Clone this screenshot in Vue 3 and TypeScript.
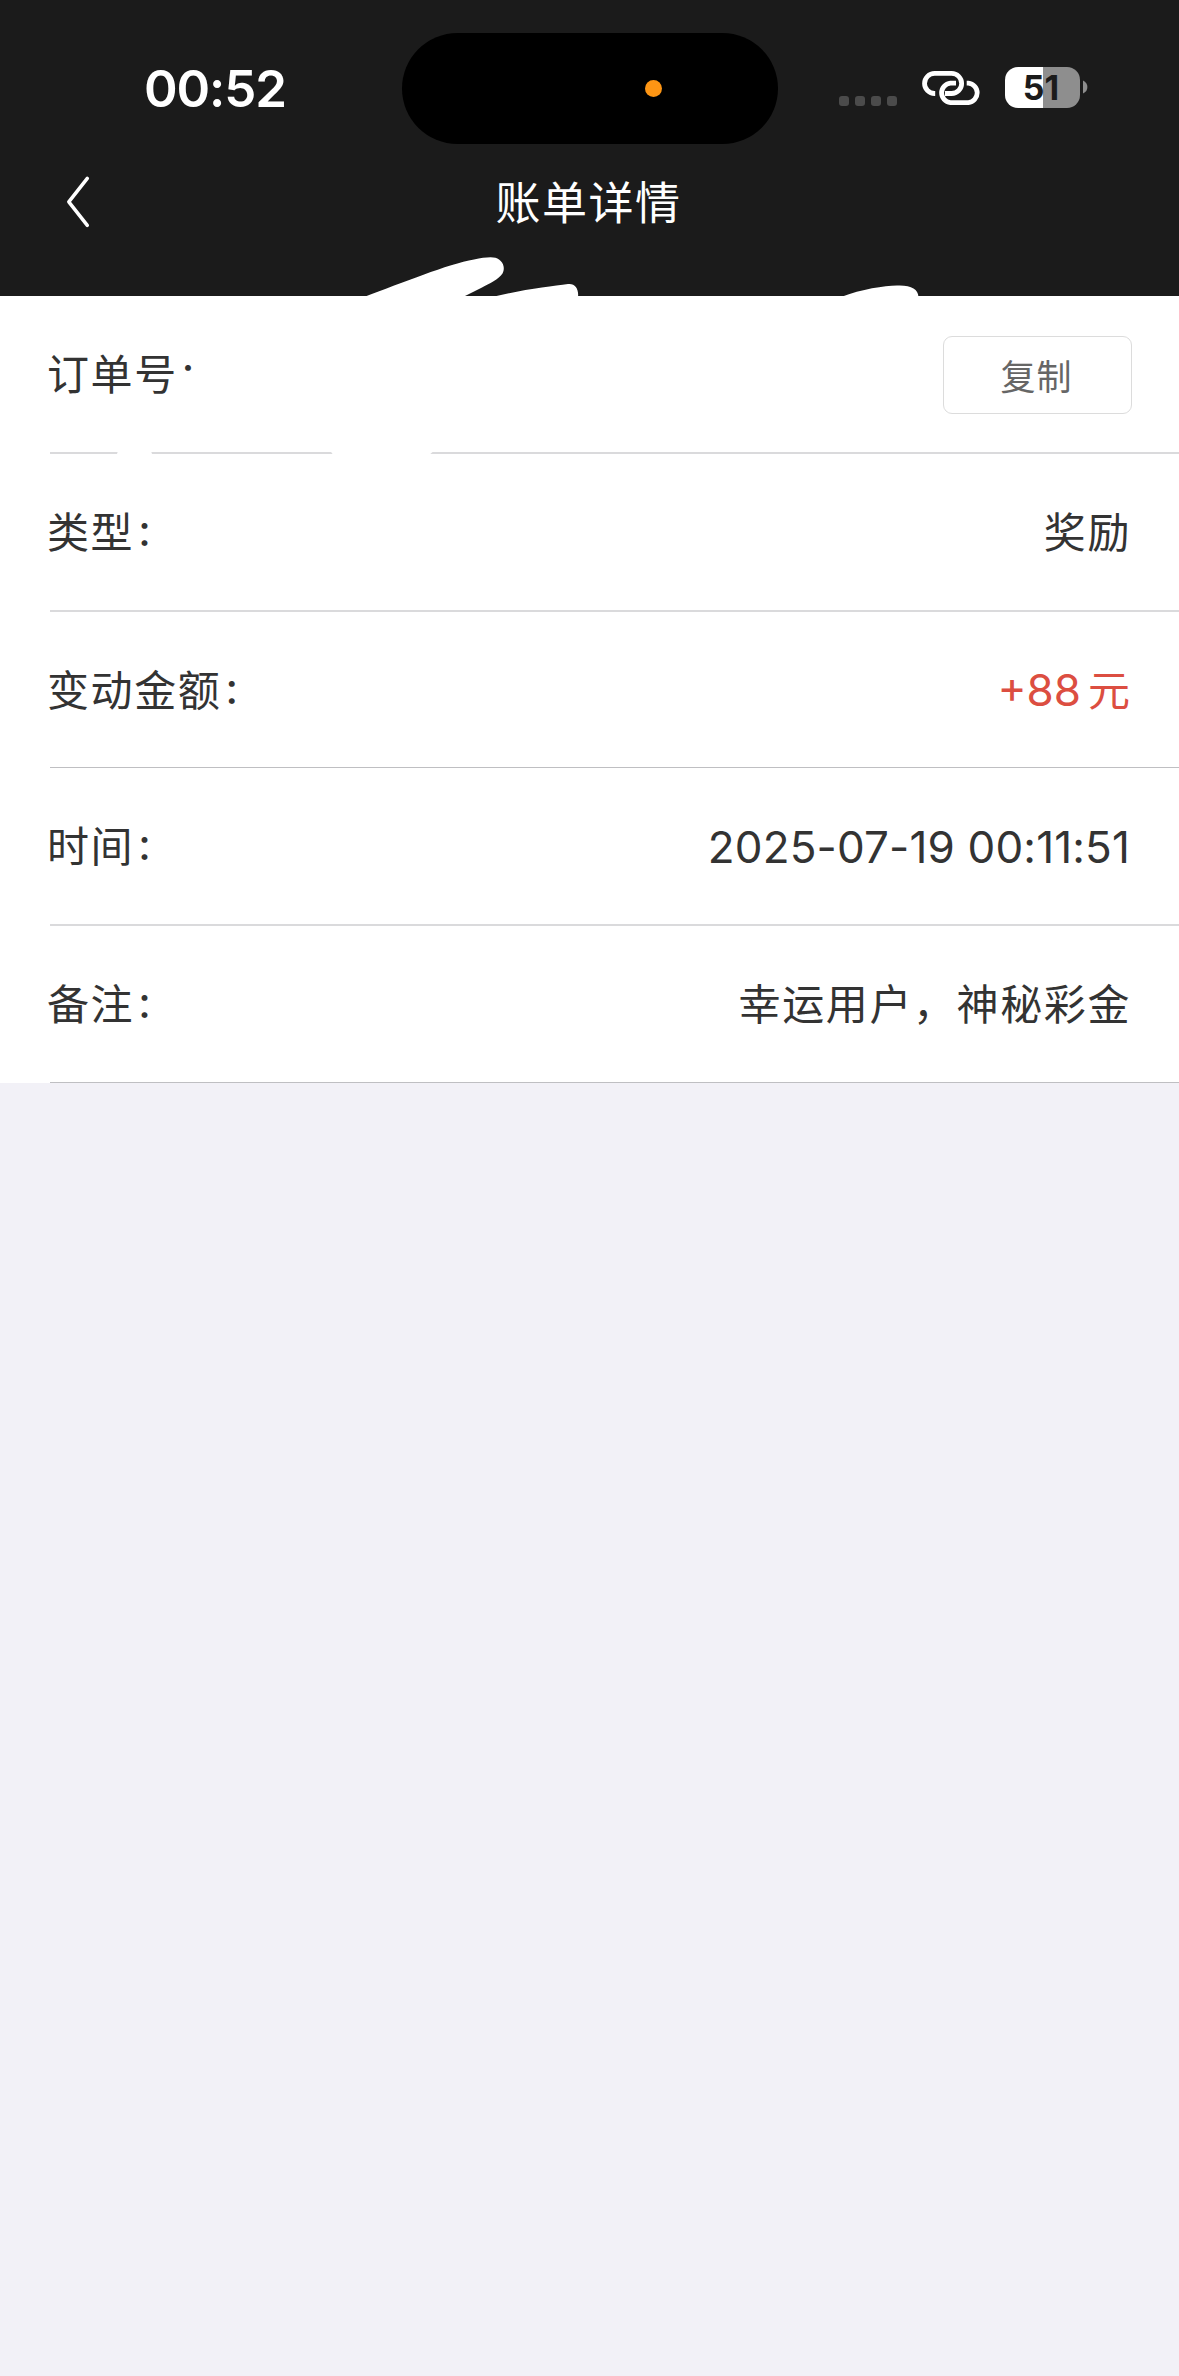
<script setup lang="ts">
interface Row {
  label: string
  value: string
  kind: 'copy' | 'text' | 'amount' | 'time'
  line: 'soft' | 'sharp'
  height: number
}

const rows: Row[] = [
  { label: '订单号', value: '复制', kind: 'copy', line: 'soft', height: 158 },
  { label: '类型', value: '奖励', kind: 'text', line: 'soft', height: 158 },
  { label: '变动金额', value: '+88', kind: 'amount', line: 'sharp', height: 156 },
  { label: '时间', value: '2025-07-19 00:11:51', kind: 'time', line: 'soft', height: 158 },
  { label: '备注', value: '幸运用户，神秘彩金', kind: 'text', line: 'sharp', height: 157 },
]
</script>

<template>
  <div class="screen">
    <header class="header">
      <div class="status">
        <div class="clock">00:52</div>
        <div class="island"><i class="mic"></i></div>
        <div class="indicators">
          <div class="signal"><i v-for="n in 4" :key="n"></i></div>
          <svg class="link" width="60" height="36" viewBox="0 0 60 36" fill="none" stroke="#fff" stroke-width="4.8">
            <path d="M14.2 23.5H13.6A10 10 0 0 1 13.6 3.4H30.6A10 10 0 0 1 30.6 23.5H24" />
            <path d="M45.7 13.1H47.4A9.8 9.8 0 0 1 47.4 32.6H29.4A9.8 9.8 0 0 1 29.4 13.1H35" />
          </svg>
          <div class="battery"><span>51</span></div>
          <svg class="nub" width="5" height="14" viewBox="0 0 5 14"><path d="M0 .5Q4.4 2.5 4.4 7T0 13.5Z" fill="#8e8e8e" /></svg>
        </div>
      </div>
      <nav class="nav">
        <svg class="back" width="30" height="56" viewBox="0 0 30 56" fill="none" stroke="#fff" stroke-width="3.5" stroke-linecap="round" stroke-linejoin="round">
          <path d="M23.300 4.300L4.800 27.800L23.300 51.300" />
        </svg>
        <h1>账单详情</h1>
      </nav>
    </header>

    <main class="list">
      <section v-for="row in rows" :key="row.label" class="row" :style="{ height: row.height + 'px' }">
        <div class="cell" :class="row.line">
          <span class="label">{{ row.label }}<span class="colon">：</span></span>
          <button v-if="row.kind === 'copy'" class="copy">{{ row.value }}</button>
          <span v-else-if="row.kind === 'amount'" class="amount"><b>{{ row.value }}</b>元</span>
          <span v-else class="value" :class="row.kind">{{ row.value }}</span>
        </div>
      </section>
    </main>

    <!-- white marker strokes hiding the order number -->
    <svg class="marker" width="1179" height="220" viewBox="0 250 1179 220" fill="#fff">
      <path d="M364 297C402 283 448 264 474 259.500C486 257 495 256 499 259.500C504 263 505 269 502.500 273.500C499 279 489 284 482 287.500L463 297Z" />
      <path d="M492 297C520 290 552 286 568 284C575 283 579 289 578 297Z" />
      <path d="M841 297C862 289 884 286 897 285.600C911 285 918 289 918.500 297Z" />
      <path d="M183 374H600V430H183Z" />
      <path d="M119 449L150 449L153 456H116Z" />
      <path d="M329 449H436L428 456H334Z" />
    </svg>
  </div>
</template>

<style>
body {
  margin: 0;
  background: #f2f1f7;
}
</style>

<style scoped>
.screen {
  position: relative;
  width: 1179px;
  height: 2376px;
  background: #f2f1f7;
  color: #333;
  font-family: Inter, "Noto Sans CJK SC", sans-serif;
  overflow: hidden;
}
.header {
  height: 296px;
  background: #1b1b1b;
  color: #fff;
}
.status {
  display: flex;
  height: 144px;
  box-sizing: border-box;
  padding-top: 33px;
}
.clock {
  width: 258px;
  padding-left: 144px;
  line-height: 112px;
  font-size: 51px;
  font-weight: 600;
  letter-spacing: -1.1px;
  white-space: nowrap;
}
.island {
  flex: none;
  display: flex;
  align-items: center;
  justify-content: flex-end;
  width: 376px;
  height: 111px;
  box-sizing: border-box;
  padding-right: 116px;
  border-radius: 56px;
  background: #000;
}
.mic {
  width: 17px;
  height: 17px;
  border-radius: 50%;
  background: #fd9514;
}
.indicators {
  flex: none;
  display: flex;
  align-items: flex-start;
  padding: 34px 0 0 61px;
}
.signal {
  display: flex;
  gap: 6px;
  margin-top: 29px;
}
.signal i {
  width: 10px;
  height: 10px;
  border-radius: 3px;
  background: #4b4b4b;
}
.link {
  margin: 3px 0 0 24px;
}
.battery {
  width: 75px;
  height: 41px;
  box-sizing: border-box;
  padding-right: 3px;
  margin-left: 24px;
  border-radius: 13px;
  background: linear-gradient(90deg, #fff 38px, #8e8e8e 38px);
  color: #1b1b1b;
  font-size: 34px;
  font-weight: 700;
  line-height: 42px;
  text-align: center;
}
.nub {
  margin: 13px 0 0 3px;
}
.nav {
  display: flex;
  align-items: center;
  height: 116px;
  padding-left: 64px;
}
.back {
  flex: none;
}
h1 {
  flex: 1;
  margin: 0 96px 0 0;
  padding-top: 3px;
  font-size: 45px;
  font-weight: 400;
  letter-spacing: 1.5px;
  line-height: 60px;
  text-align: center;
}
.list {
  background: #fff;
  height: 787px;
}
.row {
  padding-left: 50px;
}
.cell {
  display: flex;
  align-items: center;
  justify-content: space-between;
  height: 100%;
  box-sizing: border-box;
  padding: 2px 49px 0 0;
  font-size: 42px;
  line-height: 60px;
}
.soft {
  border-bottom: 2px solid #dadadc;
}
.sharp {
  border-bottom: 1px solid #bfbfc2;
}
.label {
  margin-left: -3px;
  letter-spacing: 1.6px;
}
.colon {
  position: relative;
  top: -2px;
  left: 1.5px;
  font-size: 35px;
  font-weight: 500;
  line-height: 1;
}
.value {
  margin-right: -1px;
  letter-spacing: 1.6px;
}
.time {
  margin-top: -1px;
  margin-right: 0;
  letter-spacing: 0.15px;
  font-size: 44px;
}
.amount {
  color: #dc4e41;
}
.amount b {
  font-size: 44px;
  font-weight: 400;
  margin-right: 7px;
}
.copy {
  width: 189px;
  height: 78px;
  margin-right: -2px;
  padding: 0 2px 1px 0;
  border: 1px solid #dcdcdc;
  border-radius: 9px;
  background: #fff;
  color: #666;
  font: 400 35px/60px "Noto Sans CJK SC", sans-serif;
  letter-spacing: 1px;
}
.marker {
  position: absolute;
  top: 250px;
  left: 0;
}
</style>
